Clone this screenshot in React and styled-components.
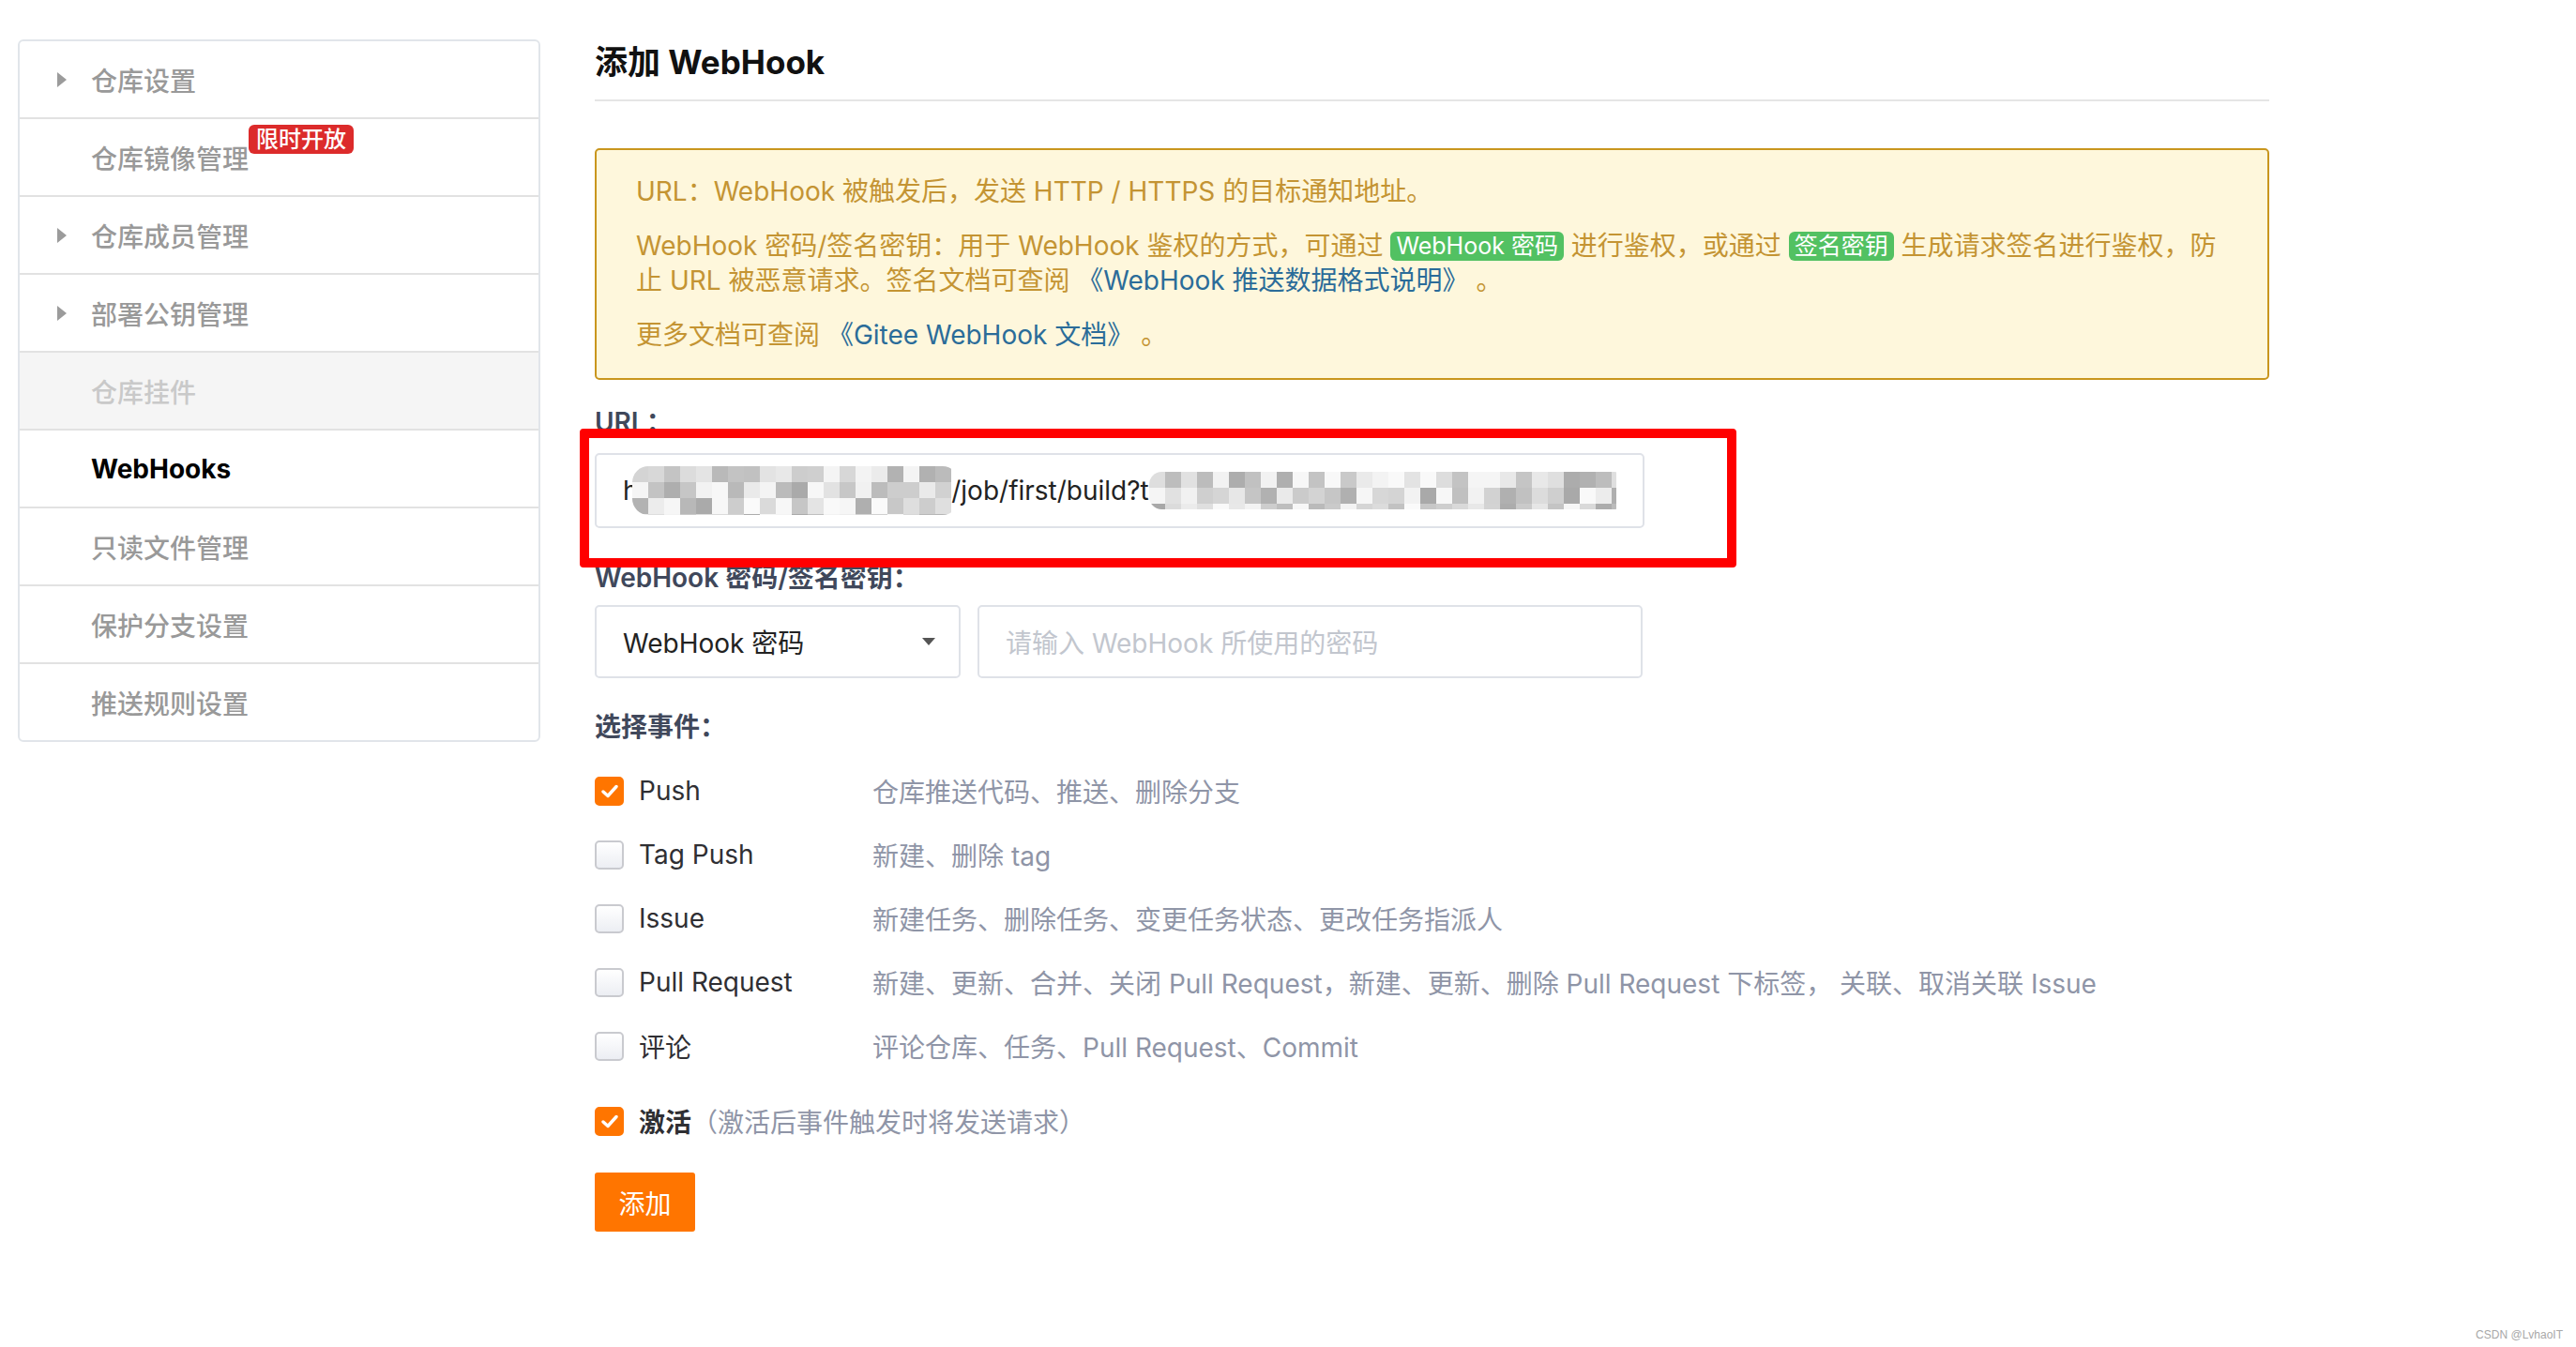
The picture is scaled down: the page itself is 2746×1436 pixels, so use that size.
import React from 'react';
import styled, { createGlobalStyle } from 'styled-components';

const GlobalStyle = createGlobalStyle`
  html, body {
    margin: 0;
    padding: 0;
    background: #fff;
  }

  body {
    font-family: Inter, "Noto Sans CJK SC", sans-serif;
    color: #333;
  }
`;

const Page = styled.div`
  position: relative;
  display: flex;
  align-items: flex-start;
  gap: 58px;
  padding: 42px 0 0 19px;
  min-height: 1436px;
  box-sizing: border-box;
`;

const Sidebar = styled.nav`
  width: 557px;
  flex-shrink: 0;
  box-sizing: border-box;
  border: 2px solid #e1e5ea;
  border-radius: 6px;
  background: #fff;
`;

const NavItem = styled.div`
  position: relative;
  display: flex;
  align-items: center;
  gap: 26px;
  height: 81px;
  padding-left: ${({ $caret }) => ($caret ? '40px' : '76px')};
  font-size: 28px;
  font-weight: ${({ $active }) => ($active ? 700 : 500)};
  color: ${({ $active, $disabled }) => ($active ? '#000' : $disabled ? '#c9c9c9' : '#999')};
  background: ${({ $disabled }) => ($disabled ? '#f5f5f5' : 'transparent')};

  & + & {
    border-top: 2px solid #e2e2e2;
  }
`;

const Caret = styled.span`
  width: 0;
  height: 0;
  border-top: 8px solid transparent;
  border-bottom: 8px solid transparent;
  border-left: 10px solid #9b9b9b;
`;

const NavLabel = styled.span`
  position: relative;
`;

const Badge = styled.span`
  position: absolute;
  left: 100%;
  top: -15px;
  padding: 0 8px;
  line-height: 31px;
  border-radius: 6px;
  background: #dc2b2b;
  color: #fff;
  font-size: 24px;
  font-weight: 500;
  white-space: nowrap;
`;

const Main = styled.main`
  width: 1785px;
`;

const Title = styled.h2`
  margin: 0;
  padding-bottom: 16px;
  border-bottom: 2px solid #e5e5e5;
  font-size: 35px;
  line-height: 48px;
  font-weight: 700;
  color: #111;
`;

const Notice = styled.div`
  margin-top: 50px;
  padding: 26px 40px 27px 42px;
  border: 2px solid #c9961e;
  border-radius: 5px;
  background: #fef7dc;
  color: #c49433;
  font-size: 28px;
  line-height: 37.5px;

  p {
    margin: 0;
    white-space: nowrap;
  }

  p + p {
    margin-top: 20px;
  }
`;

const Tag = styled.span`
  display: inline-block;
  padding: 0 6px;
  border-radius: 6px;
  background: #52c162;
  color: #fff;
  font-size: 25px;
  line-height: 31px;
  vertical-align: 1px;
`;

const DocLink = styled.a`
  color: #2b6c99;
  text-decoration: none;
`;

const FieldLabel = styled.div`
  margin-top: ${({ $mt }) => $mt}px;
  font-size: 28px;
  line-height: 38px;
  font-weight: 600;
  color: #40485b;
`;

const UrlField = styled.div`
  position: relative;
  width: 1119px;
  margin-top: 14px;
`;

const Highlight = styled.div`
  position: absolute;
  left: -16px;
  top: -26px;
  width: 1233px;
  height: 148px;
  box-sizing: border-box;
  border: 10px solid #ff0000;
  border-radius: 4px;
  pointer-events: none;
`;

const Box = styled.div`
  display: flex;
  align-items: center;
  width: ${({ $w }) => $w}px;
  height: ${({ $h }) => $h || 78}px;
  box-sizing: border-box;
  padding: 0 28px;
  border: 2px solid #dfe2e8;
  border-radius: 5px;
  background: #fff;
  font-size: 28px;
  color: ${({ $placeholder }) => ($placeholder ? '#c2c6ce' : '#222')};
  white-space: nowrap;
  overflow: hidden;
`;

const SelectRow = styled.div`
  display: flex;
  gap: 18px;
  margin-top: 10px;
`;

const SelectBox = styled(Box)`
  justify-content: space-between;
  padding-right: 25px;
`;

const SelectCaret = styled.span`
  width: 0;
  height: 0;
  border-left: 7px solid transparent;
  border-right: 7px solid transparent;
  border-top: 8px solid #555;
`;

const Events = styled.div`
  margin-top: 15px;
`;

const EventRow = styled.div`
  display: flex;
  align-items: center;
  height: 68px;
  margin-top: ${({ $mt }) => $mt || 0}px;
  font-size: 28px;
`;

const Check = styled.span`
  display: flex;
  align-items: center;
  justify-content: center;
  width: 31px;
  height: 31px;
  flex-shrink: 0;
  box-sizing: border-box;
  border-radius: 5px;
  border: 2px solid ${({ $on }) => ($on ? '#ff7500' : '#c9cacf')};
  background: ${({ $on }) => ($on ? '#ff7500' : 'linear-gradient(#ffffff, #eceef3)')};
`;

const EventName = styled.span`
  width: 249px;
  margin-left: 16px;
  color: #2f2f33;
`;

const ActiveName = styled.span`
  margin-left: 16px;
  color: #2f2f33;
  font-weight: 700;
`;

const EventDesc = styled.span`
  color: #8f95a7;
  white-space: nowrap;
`;

const SubmitButton = styled.button`
  margin-top: 21px;
  width: 107px;
  height: 63px;
  border: none;
  border-radius: 3px;
  background: #ff7500;
  color: #fff;
  font-family: inherit;
  font-size: 28px;
`;

const Watermark = styled.div`
  position: absolute;
  right: 14px;
  bottom: 6px;
  font-family: "Liberation Sans", sans-serif;
  font-size: 12px;
  color: #a8a8a8;
`;

// blurred part of the url, drawn as a grey mosaic
const Mosaic = ({ width, height, cell, seed, style }) => {
  let s = seed;
  const rnd = () => {
    s = (s * 9301 + 49297) % 233280;
    return s / 233280;
  };
  const cols = Math.ceil(width / cell);
  const rows = Math.ceil(height / cell);
  const rects = [];
  for (let r = 0; r < rows; r++) {
    for (let c = 0; c < cols; c++) {
      const v = rnd();
      const g = v < 0.3 ? 250 - Math.floor(rnd() * 10) : 168 + Math.floor(rnd() * 70);
      rects.push(
        <rect key={`${r}-${c}`} x={c * cell} y={r * cell} width={cell} height={cell} fill={`rgb(${g},${g},${g})`} />,
      );
    }
  }
  return (
    <svg width={width} height={height} style={style}>
      <defs>
        <clipPath id={`m${seed}`}>
          <rect x="0" y="0" width={width} height={height} rx={height / 3} />
        </clipPath>
      </defs>
      <g clipPath={`url(#m${seed})`}>{rects}</g>
    </svg>
  );
};

const CheckMark = () => (
  <svg width="18" height="15" viewBox="0 0 18 15">
    <polyline points="2,8 7,12.5 16,2.5" fill="none" stroke="#fff" strokeWidth="3.4" strokeLinecap="round" strokeLinejoin="round" />
  </svg>
);

const navItems = [
  { label: '仓库设置', caret: true },
  { label: '仓库镜像管理', badge: '限时开放' },
  { label: '仓库成员管理', caret: true },
  { label: '部署公钥管理', caret: true },
  { label: '仓库挂件', disabled: true },
  { label: 'WebHooks', active: true },
  { label: '只读文件管理' },
  { label: '保护分支设置' },
  { label: '推送规则设置' },
];

const events = [
  { name: 'Push', desc: '仓库推送代码、推送、删除分支', checked: true },
  { name: 'Tag Push', desc: '新建、删除 tag' },
  { name: 'Issue', desc: '新建任务、删除任务、变更任务状态、更改任务指派人' },
  {
    name: 'Pull Request',
    desc: '新建、更新、合并、关闭 Pull Request，新建、更新、删除 Pull Request 下标签， 关联、取消关联 Issue',
  },
  { name: '评论', desc: '评论仓库、任务、Pull Request、Commit' },
];

const App = () => (
  <>
    <GlobalStyle />
    <Page>
      <Sidebar>
        {navItems.map((item) => (
          <NavItem key={item.label} $caret={item.caret} $active={item.active} $disabled={item.disabled}>
            {item.caret && <Caret />}
            <NavLabel>
              {item.label}
              {item.badge && <Badge>{item.badge}</Badge>}
            </NavLabel>
          </NavItem>
        ))}
      </Sidebar>

      <Main>
        <Title>添加 WebHook</Title>

        <Notice>
          <p>URL：WebHook 被触发后，发送 HTTP / HTTPS 的目标通知地址。</p>
          <p>
            WebHook 密码/签名密钥：用于 WebHook 鉴权的方式，可通过 <Tag>WebHook 密码</Tag> 进行鉴权，或通过{' '}
            <Tag>签名密钥</Tag> 生成请求签名进行鉴权，防
            <br />
            止 URL 被恶意请求。签名文档可查阅 <DocLink href="#">《WebHook 推送数据格式说明》</DocLink> 。
          </p>
          <p>
            更多文档可查阅 <DocLink href="#">《Gitee WebHook 文档》</DocLink> 。
          </p>
        </Notice>

        <FieldLabel $mt={26}>URL：</FieldLabel>
        <UrlField>
          <Box $w={1119} $h={80}>
            h
            <Mosaic width={348} height={52} cell={17} seed={37} style={{ marginLeft: -7 }} />
            /job/first/build?t
            <Mosaic width={509} height={40} cell={17} seed={91} />
          </Box>
          <Highlight />
        </UrlField>

        <FieldLabel $mt={34}>WebHook 密码/签名密钥：</FieldLabel>
        <SelectRow>
          <SelectBox $w={390}>
            WebHook 密码
            <SelectCaret />
          </SelectBox>
          <Box $w={709} $placeholder>
            请输入 WebHook 所使用的密码
          </Box>
        </SelectRow>

        <FieldLabel $mt={33}>选择事件：</FieldLabel>
        <Events>
          {events.map((ev) => (
            <EventRow key={ev.name}>
              <Check $on={ev.checked}>{ev.checked && <CheckMark />}</Check>
              <EventName>{ev.name}</EventName>
              <EventDesc>{ev.desc}</EventDesc>
            </EventRow>
          ))}
          <EventRow $mt={12}>
            <Check $on>
              <CheckMark />
            </Check>
            <ActiveName>激活</ActiveName>
            <EventDesc>（激活后事件触发时将发送请求）</EventDesc>
          </EventRow>
        </Events>

        <SubmitButton>添加</SubmitButton>
      </Main>

      <Watermark>CSDN @LvhaoIT</Watermark>
    </Page>
  </>
);

export default App;
